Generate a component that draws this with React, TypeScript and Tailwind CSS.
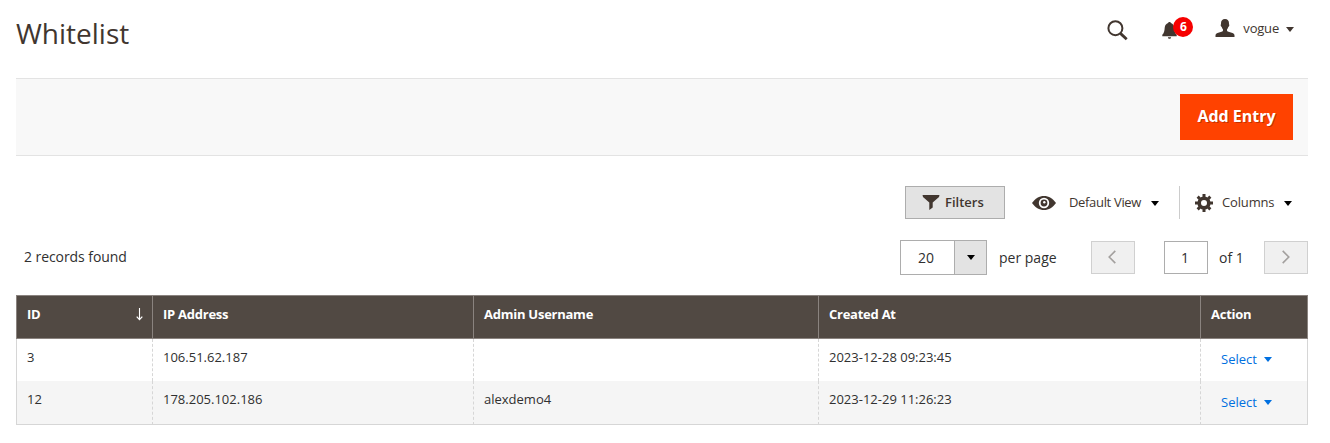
import React from "react";

const Caret = ({ className = "" }: { className?: string }) => (
  <svg width="8" height="5" viewBox="0 0 8 5" className={`shrink-0 ${className}`} fill="currentColor">
    <path d="M0 0h8L4 5z" />
  </svg>
);

const SearchIcon = () => (
  <svg width="21" height="21" viewBox="0 0 21 21" fill="none" stroke="#41362f">
    <circle cx="8.4" cy="8.2" r="7" strokeWidth="2" />
    <path d="M13.4 13.4l6.3 5.8" strokeWidth="2.8" />
  </svg>
);

const BellIcon = () => (
  <svg width="15" height="18" viewBox="0 0 15 18" fill="#41362f">
    <path d="M7.5 0c.8 0 1.3.5 1.4 1.1 2 .6 3.2 2.4 3.4 4.6.2 3.2.6 5.200 2.400 7.100v1.400H.3v-1.400c1.800-1.900 2.200-3.900 2.400-7.100C2.900 3.500 4.100 1.700 6.100 1.100 6.200.5 6.700 0 7.500 0zM5.900 15.200h3.200c-.1 1-.8 1.600-1.600 1.600s-1.500-.6-1.600-1.600z" />
  </svg>
);

const UserIcon = () => (
  <svg width="20" height="18" viewBox="0 0 20 18" fill="#41362f">
    <path d="M10 0c2.600 0 4 1.700 4 4.300 0 .4 0 .7-.1 1 .5.1.5.7.3 1.400-.1.600-.4 1-.8 1.100-.3 1.200-.8 2-1.400 2.600v1.200c0 .4.300.7.700.8l4.800 1.500c1.400.5 2 1.300 2 2.500V18H.500v-1.600c0-1.200.6-2 2-2.500l4.800-1.500c.4-.1.700-.4.700-.8v-1.200c-.6-.6-1.100-1.400-1.400-2.600-.4-.1-.7-.5-.8-1.100-.2-.7-.2-1.300.3-1.400C6 5 6 4.700 6 4.300 6 1.700 7.400 0 10 0z" />
  </svg>
);

const FunnelIcon = () => (
  <svg width="18" height="15" viewBox="0 0 18 15" fill="#41362f">
    <path d="M.6 0h16.800c0 1.300-.5 2.200-1.500 3L10.700 7.600V12.600L7.300 15V7.600L2.100 3C1.100 2.200.6 1.300.6 0z" />
  </svg>
);

const EyeIcon = () => (
  <svg width="24" height="14" viewBox="0 0 24 14">
    <path d="M0 7C3.200 2.500 7.200 0 12 0s8.800 2.500 12 7c-3.200 4.500-7.200 7-12 7S3.200 11.500 0 7z" fill="#41362f" />
    <circle cx="12" cy="7" r="5.200" fill="#fff" />
    <circle cx="12" cy="7" r="3.400" fill="#41362f" />
    <circle cx="12.300" cy="6.300" r="1.200" fill="#fff" />
  </svg>
);

const GearIcon = () => (
  <svg width="18" height="18" viewBox="-9 -9 18 18" fill="none" stroke="#41362f">
    <circle r="4.800" strokeWidth="3.600" />
    <path
      d="M0-6v-3M0 6v3M-6 0h-3M6 0h3M-4.250-4.250l-2.100-2.100M4.250 4.250l2.100 2.100M-4.250 4.250l-2.100 2.100M4.250-4.250l2.100-2.100"
      strokeWidth="3"
    />
  </svg>
);

const Chevron = ({ flip = false }: { flip?: boolean }) => (
  <svg width="8" height="14" viewBox="0 0 8 14" fill="none" stroke="#a3a09e" strokeWidth="1.6">
    <path d={flip ? "M.7 .9L6.800 7 .7 13.100" : "M7.300 .9L1.200 7l6.100 6.100"} />
  </svg>
);

const SortArrow = () => (
  <svg width="7" height="13" viewBox="0 0 7 13" fill="none" stroke="#fff">
    <path d="M3.500 0v11" strokeWidth="1.100" />
    <path d="M.7 8.600L3.500 11.600l2.800-3" strokeWidth="1.300" />
  </svg>
);

const columns = [
  { label: "ID", width: "w-[136px]" },
  { label: "IP Address", width: "w-[321px]" },
  { label: "Admin Username", width: "w-[345px]" },
  { label: "Created At", width: "w-[382px]" },
  { label: "Action", width: "w-[108px]" },
];

const records = [
  ["3", "106.51.62.187", "", "2023-12-28 09:23:45"],
  ["12", "178.205.102.186", "alexdemo4", "2023-12-29 11:26:23"],
];

export default function App() {
  return (
    <div className="h-[443px] w-[1330px] overflow-hidden bg-white pr-[22px] pl-4 font-['Open_Sans',sans-serif] text-[13px] text-[#303030]">
      <header className="flex h-[78px] justify-between">
        <h1 className="pt-3.5 text-[28px] leading-[38px] text-[#41362f]">Whitelist</h1>
        <div className="flex pr-3.5">
          <button className="mt-5 h-[21px]">
            <SearchIcon />
          </button>
          <button className="relative mt-[22px] ml-[34px] h-[18px]">
            <BellIcon />
            <span className="absolute -top-[5px] left-[11px] flex h-5 w-5 items-center justify-center rounded-full bg-[#f60000] text-[12px] leading-none font-bold text-white">
              6
            </span>
          </button>
          <button className="mt-[19px] ml-[38px] flex h-[18px] items-center text-[#41362f]">
            <UserIcon />
            <span className="ml-2 text-[13px] leading-[18px] tracking-[-0.2px]">vogue</span>
            <Caret className="mt-0.5 ml-[7px]" />
          </button>
        </div>
      </header>

      <div className="flex h-[78px] items-start justify-end border-y border-[#e3e3e3] bg-[#f8f8f8] pt-[15px] pr-[15px]">
        <button className="h-[46px] w-[113px] bg-[#ff4200] pb-0.5 text-[16px] font-bold whitespace-nowrap text-white [text-shadow:1px_1px_0_rgba(0,0,0,0.25)]">
          Add Entry
        </button>
      </div>

      <div className="mt-[30px] flex h-[33px] items-center justify-end text-[#41362f]">
        <button className="flex h-[33px] w-[100px] items-center border border-[#adadad] bg-[#e3e3e3] pl-4 font-semibold">
          <FunnelIcon />
          <span className="ml-[5px]">Filters</span>
        </button>
        <button className="ml-[27px] flex w-[147px] items-center">
          <EyeIcon />
          <span className="ml-[13px] w-[72px] text-left tracking-[-0.33px] whitespace-nowrap">Default View</span>
          <Caret className="mt-0.5 ml-[10px] text-black" />
        </button>
        <button className="flex h-[33px] w-[129px] items-center border-l border-[#ccc] pl-[15px]">
          <GearIcon />
          <span className="ml-[9px] w-[52px] text-left tracking-[-0.15px]">Columns</span>
          <Caret className="mt-0.5 ml-[10px] text-black" />
        </button>
      </div>

      <div className="mt-[21px] flex h-[35px] items-center text-[14px]">
        <p className="flex-1 pb-0.5 pl-2 tracking-[-0.07px]">2 records found</p>
        <div className="flex h-[35px] w-[87px] border border-[#adadad] bg-white">
          <span className="flex w-[53px] items-center justify-center pr-[3px]">20</span>
          <span className="flex flex-1 items-center justify-center border-l border-[#adadad] bg-[#e3e3e3] text-black">
            <Caret />
          </span>
        </div>
        <span className="ml-3 w-[92px]">per page</span>
        <button className="flex h-[33px] w-11 items-center justify-center border border-[#d0d0d0] bg-[#f0f0f0] pr-[3px] pb-0.5">
          <Chevron />
        </button>
        <span className="ml-[29px] flex h-[33px] w-11 items-center justify-center border border-[#adadad] pr-0.5">1</span>
        <span className="ml-[11px] w-[45px]">of 1</span>
        <button className="flex h-[33px] w-11 items-center justify-center border border-[#d0d0d0] bg-[#f0f0f0] pb-0.5">
          <Chevron flip />
        </button>
      </div>

      <table className="mt-5 w-[1292px] table-fixed border-separate border-spacing-0 text-left">
        <thead>
          <tr className="h-11 bg-[#514943] align-top text-white">
            {columns.map((c) => (
              <th
                key={c.label}
                className={`${c.width} border-y border-l border-[#8a837f] px-[10px] pt-[9px] leading-[18px] font-bold tracking-[-0.25px] last:border-r`}
              >
                <div className="flex justify-between">
                  {c.label}
                  {c.label === "ID" && (
                    <span className="-mr-px pt-[3px]">
                      <SortArrow />
                    </span>
                  )}
                </div>
              </th>
            ))}
          </tr>
        </thead>
        <tbody>
          {records.map((r) => (
            <tr
              key={r[0]}
              className="h-[42px] align-top last:h-11 even:bg-[#f5f5f5] [&:last-child>td]:border-b [&:last-child>td:last-child]:pt-3"
            >
              {r.map((v, i) => (
                <td
                  key={i}
                  className="border-[#d6d6d6] px-[10px] pt-[9px] leading-[18px] [border-left-style:dashed] [border-left-width:1px] first:[border-left-style:solid]"
                >
                  {v}
                </td>
              ))}
              <td className="border-x border-[#d6d6d6] pt-[11px] pl-[20px] leading-[18px] [border-left-style:dashed]">
                <button className="flex items-center text-[#0070e0]">
                  Select
                  <Caret className="ml-[7px]" />
                </button>
              </td>
            </tr>
          ))}
        </tbody>
      </table>
    </div>
  );
}
